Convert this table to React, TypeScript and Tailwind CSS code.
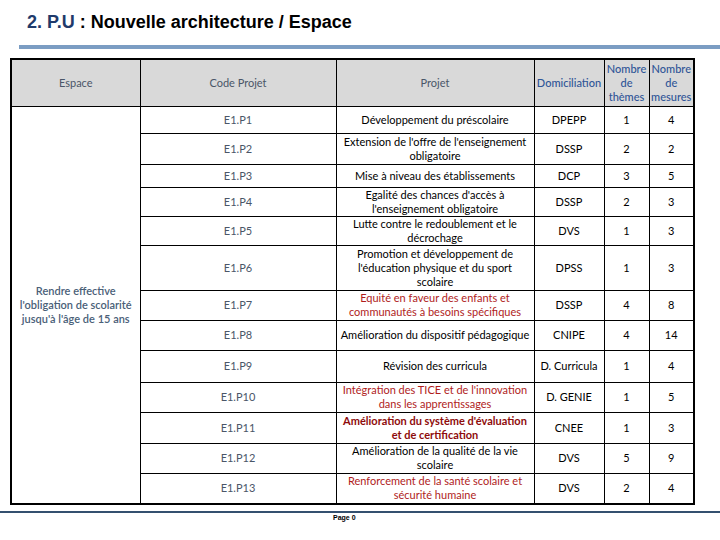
import React from 'react';

type Row = {
  code: string;
  projet: string[];
  dom: string;
  themes: string;
  mesures: string;
  tone?: 'red' | 'bold';
  h: string;
};

const ROWS: Row[] = [
  { code: 'E1.P1', projet: ['Développement du préscolaire'], dom: 'DPEPP', themes: '1', mesures: '4', h: 'h-[27px]' },
  { code: 'E1.P2', projet: ["Extension de l'offre de l'enseignement", 'obligatoire'], dom: 'DSSP', themes: '2', mesures: '2', h: 'h-[31px]' },
  { code: 'E1.P3', projet: ['Mise à niveau des établissements'], dom: 'DCP', themes: '3', mesures: '5', h: 'h-[23px]' },
  { code: 'E1.P4', projet: ["Egalité des chances d'accès à", "l'enseignement obligatoire"], dom: 'DSSP', themes: '2', mesures: '3', h: 'h-[29px]' },
  { code: 'E1.P5', projet: ['Lutte contre le redoublement et le', 'décrochage'], dom: 'DVS', themes: '1', mesures: '3', h: 'h-[29px]' },
  { code: 'E1.P6', projet: ['Promotion et développement de', "l'éducation physique et du sport", 'scolaire'], dom: 'DPSS', themes: '1', mesures: '3', h: 'h-[45px]' },
  { code: 'E1.P7', projet: ['Equité en faveur des enfants et', 'communautés à besoins spécifiques'], dom: 'DSSP', themes: '4', mesures: '8', tone: 'red', h: 'h-[30px]' },
  { code: 'E1.P8', projet: ['Amélioration du dispositif pédagogique'], dom: 'CNIPE', themes: '4', mesures: '14', h: 'h-[30px]' },
  { code: 'E1.P9', projet: ['Révision des curricula'], dom: 'D. Curricula', themes: '1', mesures: '4', h: 'h-[32px]' },
  { code: 'E1.P10', projet: ["Intégration des TICE et de l'innovation", 'dans les apprentissages'], dom: 'D. GENIE', themes: '1', mesures: '5', tone: 'red', h: 'h-[30px]' },
  { code: 'E1.P11', projet: ["Amélioration du système d'évaluation", 'et de certification'], dom: 'CNEE', themes: '1', mesures: '3', tone: 'bold', h: 'h-[31px]' },
  { code: 'E1.P12', projet: ['Amélioration de la qualité de la vie', 'scolaire'], dom: 'DVS', themes: '5', mesures: '9', h: 'h-[30px]' },
  { code: 'E1.P13', projet: ['Renforcement de la santé scolaire et', 'sécurité humaine'], dom: 'DVS', themes: '2', mesures: '4', tone: 'red', h: 'h-[31px]' },
];

const cell = 'border border-black text-center align-middle p-0';

export default function App() {
  return (
    <div className="w-[720px] h-[540px] bg-white relative overflow-hidden font-['Lato',sans-serif]">
      {/* Title */}
      <h1 className="pt-[12px] pl-[27px] text-[18px] leading-[21px] font-bold font-['Liberation_Sans',Arial,sans-serif] text-black">
        <span className="text-[#1f3a6b]">2. P.U</span> : Nouvelle architecture / Espace
      </h1>
      <div className="ml-[19px] mt-[12px] h-[4px] bg-[#7b9dc3]" />

      {/* Table */}
      <table className="ml-[10px] mt-[9px] w-[683px] table-fixed border-collapse border-2 border-black text-[11px] leading-[14px]">
        <colgroup>
          <col className="w-[129px]" />
          <col className="w-[196px]" />
          <col className="w-[198px]" />
          <col className="w-[70px]" />
          <col className="w-[45px]" />
          <col className="w-[45px]" />
        </colgroup>
        <thead>
          <tr className="h-[47px] bg-[#d9d9d9]">
            <th className={`${cell} font-normal text-[#4a5668]`}>Espace</th>
            <th className={`${cell} font-normal text-[#4a5668]`}>Code Projet</th>
            <th className={`${cell} font-normal text-[#4a5668]`}>Projet</th>
            <th className={`${cell} font-medium text-[#2f5597]`}>Domiciliation</th>
            <th className={`${cell} font-medium text-[#2f5597] leading-[14px]`}>
              Nombre
              <br />
              de
              <br />
              thèmes
            </th>
            <th className={`${cell} font-medium text-[#2f5597] leading-[14px]`}>
              Nombre
              <br />
              de
              <br />
              mesures
            </th>
          </tr>
        </thead>
        <tbody>
          {ROWS.map((r, i) => (
            <tr key={r.code} className={r.h}>
              {i === 0 && (
                <td rowSpan={ROWS.length} className={`${cell} text-[#4a6078] font-semibold`}>
                  Rendre effective
                  <br />
                  l'obligation de scolarité
                  <br />
                  jusqu'à l'âge de 15 ans
                </td>
              )}
              <td className={`${cell} text-[#4a5668]`}>{r.code}</td>
              <td
                className={`${cell} ${
                  r.tone === 'red'
                    ? 'text-[#b01c1c]'
                    : r.tone === 'bold'
                    ? 'text-[#8e0b0b] font-bold'
                    : 'text-black'
                }`}
              >
                {r.projet.map((l, j) => (
                  <div key={j}>{l}</div>
                ))}
              </td>
              <td className={`${cell} text-black`}>{r.dom}</td>
              <td className={`${cell} text-black`}>{r.themes}</td>
              <td className={`${cell} text-black`}>{r.mesures}</td>
            </tr>
          ))}
        </tbody>
      </table>

      {/* Footer */}
      <div className="mt-[6px] h-[2px] bg-[#34506f]" />
      <div className="pl-[333px] pt-[1px] text-[7px] leading-[8px] font-bold font-['Liberation_Sans',Arial,sans-serif] text-black">
        Page 0
      </div>
    </div>
  );
}
